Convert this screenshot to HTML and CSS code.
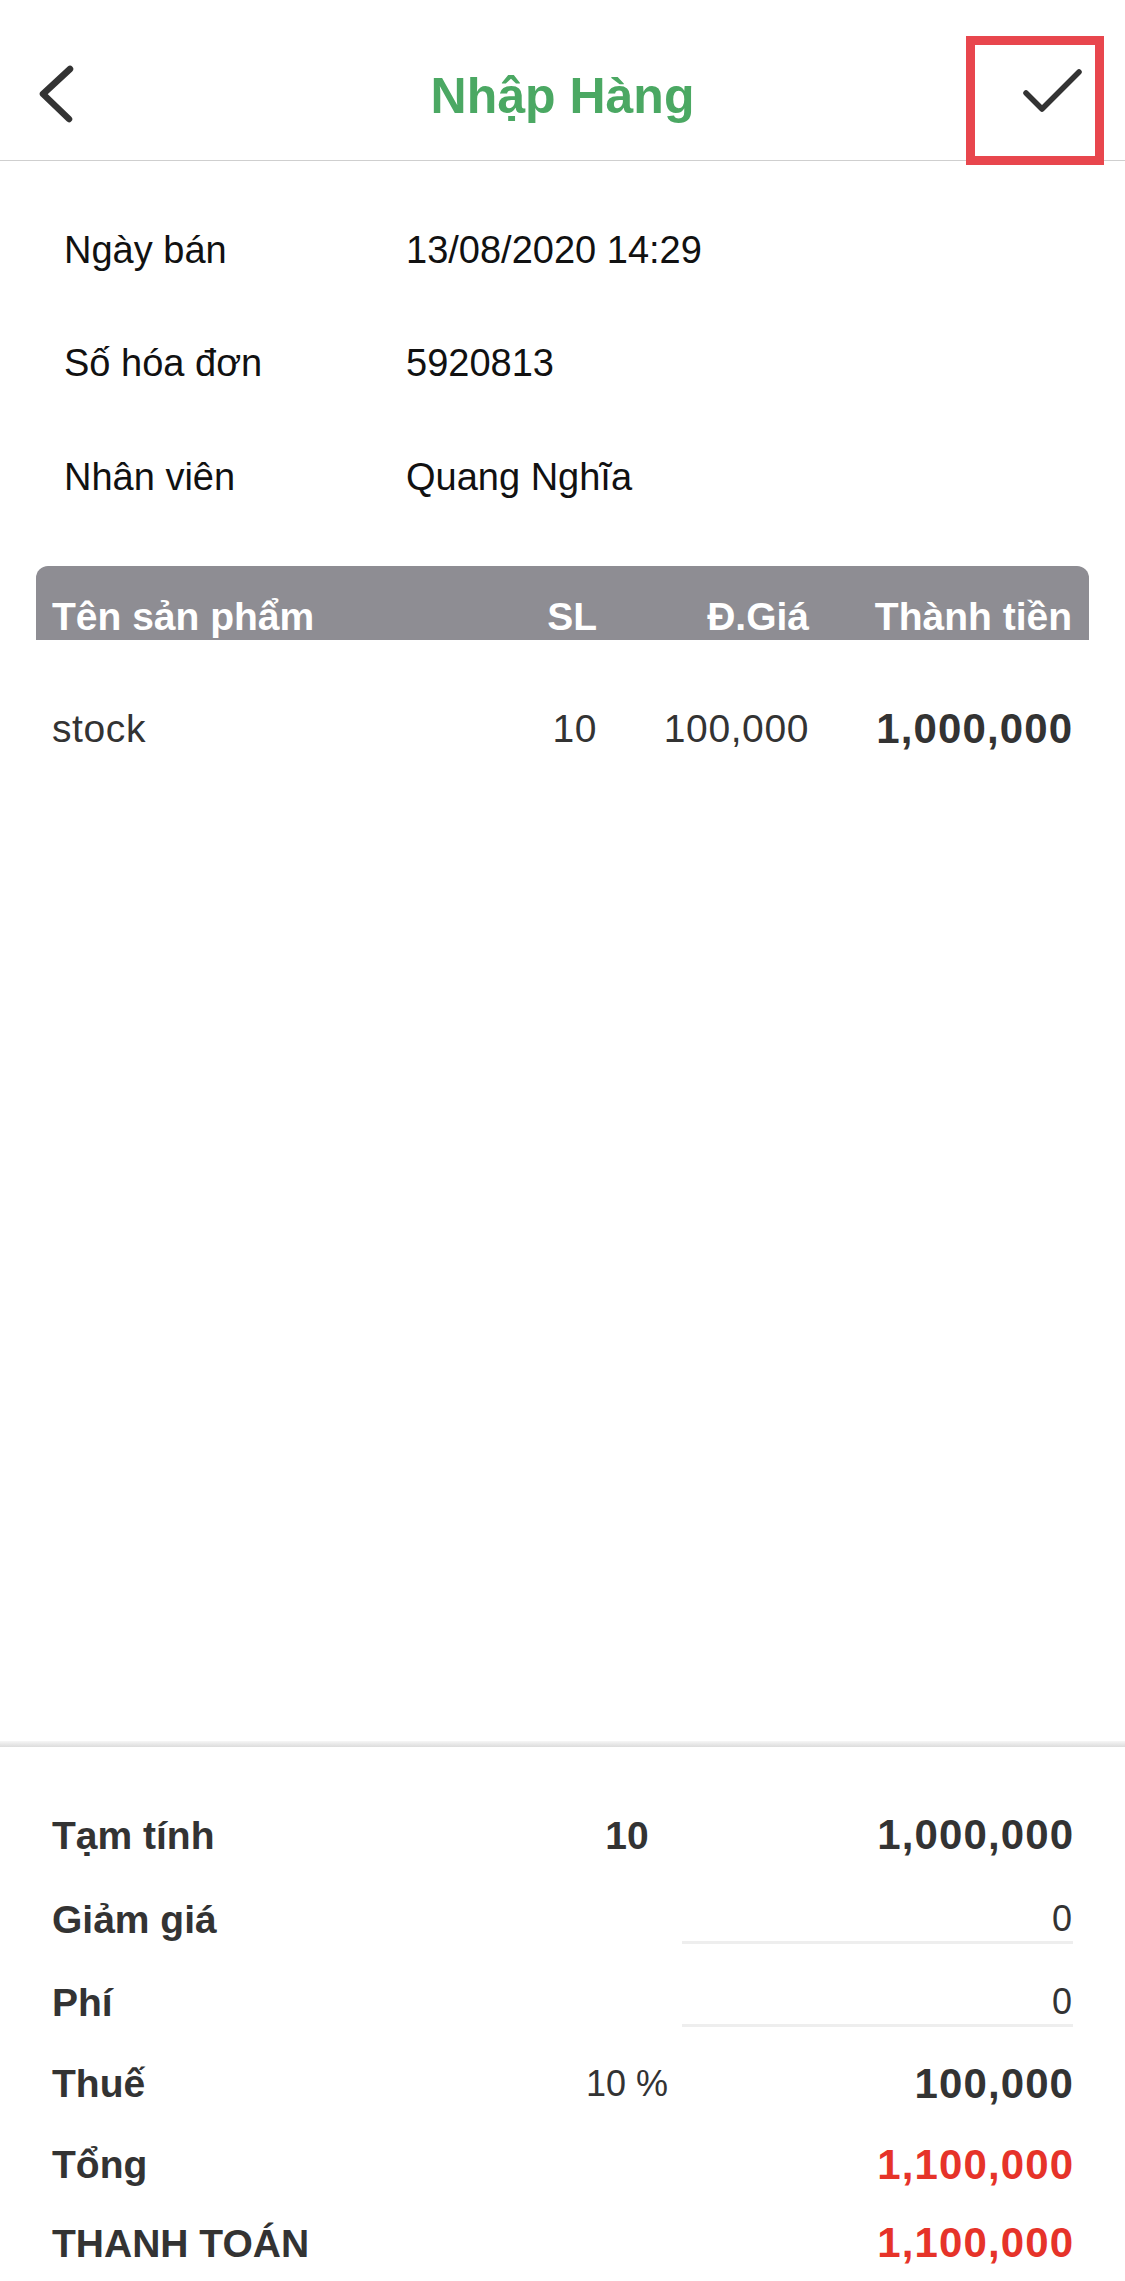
FILE: index.html
```html
<!DOCTYPE html>
<html lang="vi">
<head>
<meta charset="utf-8">
<title>Nhập Hàng</title>
<link rel="stylesheet" href="styles.css">
</head>
<body>
<div class="page">
  <header class="topbar">
    <div class="nav nav-left">
      <svg width="125" height="160" viewBox="0 0 125 160"><polyline points="70,69 43,94 69,119" fill="none" stroke="#333" stroke-width="6.5" stroke-linecap="round" stroke-linejoin="round"/></svg>
    </div>
    <h1 class="title">Nhập Hàng</h1>
    <div class="nav nav-right">
      <svg width="125" height="160" viewBox="0 0 125 160"><polyline points="26,93 42,109 79,72" fill="none" stroke="#333" stroke-width="5.5" stroke-linecap="round" stroke-linejoin="round"/></svg>
    </div>
    <div class="highlight"></div>
  </header>

  <section class="info">
    <div class="info-row"><span>Ngày bán</span><span>13/08/2020 14:29</span></div>
    <div class="info-row"><span>Số hóa đơn</span><span>5920813</span></div>
    <div class="info-row"><span>Nhân viên</span><span>Quang Nghĩa</span></div>
  </section>

  <section class="items">
    <div class="items-head">
      <span>Tên sản phẩm</span>
      <span class="r">SL</span>
      <span class="r">Đ.Giá</span>
      <span class="r">Thành tiền</span>
    </div>
    <div class="items-row">
      <span>stock</span>
      <span class="r">10</span>
      <span class="r">100,000</span>
      <span class="r"><b class="bnum">1,000,000</b></span>
    </div>
  </section>

  <div class="spacer"></div>

  <footer class="summary">
    <div class="sep"></div>
    <div class="rows">
      <div class="srow h84"><span class="label">Tạm tính</span><span class="mid bold">10</span><span class="val"><b class="bnum">1,000,000</b></span></div>
      <div class="srow h84"><span class="label">Giảm giá</span><span class="mid"></span><span class="val input">0</span></div>
      <div class="srow h82"><span class="label">Phí</span><span class="mid"></span><span class="val input">0</span></div>
      <div class="srow h81"><span class="label">Thuế</span><span class="mid small">10 %</span><span class="val"><b class="bnum">100,000</b></span></div>
      <div class="srow h81"><span class="label">Tổng</span><span class="mid"></span><span class="val"><b class="bnum red">1,100,000</b></span></div>
      <div class="srow h76"><span class="label">THANH TOÁN</span><span class="mid"></span><span class="val"><b class="bnum red">1,100,000</b></span></div>
    </div>
  </footer>
</div>
</body>
</html>
```

FILE: styles.css
```css
html, body {
  margin: 0;
  padding: 0;
  background: #ffffff;
}

body {
  font-family: "Liberation Sans", Arial, sans-serif;
  color: #333333;
}

.page {
  width: 1125px;
  height: 2281px;
  display: flex;
  flex-direction: column;
  overflow: hidden;
}

/* ---------- top bar ---------- */
.topbar {
  position: relative;
  box-sizing: border-box;
  height: 161px;
  border-bottom: 1px solid #cfcfcf;
  display: grid;
  grid-template-columns: 125px 1fr 125px;
  flex: none;
}

.nav svg {
  display: block;
}

.title {
  margin: 71px 0 0;
  align-self: start;
  text-align: center;
  font-size: 50px;
  line-height: 50px;
  font-weight: bold;
  color: #4ba863;
}

.highlight {
  position: absolute;
  left: 966px;
  top: 36px;
  width: 138px;
  height: 129px;
  box-sizing: border-box;
  border: 9px solid #e8464d;
}

/* ---------- info ---------- */
.info {
  padding: 32px 0 0 64px;
  flex: none;
}

.info-row {
  display: grid;
  grid-template-columns: 342px 1fr;
  align-items: center;
  height: 113.5px;
  font-size: 38px;
  line-height: 44px;
  color: #111111;
}

/* ---------- items table ---------- */
.items {
  margin: 32.5px 36px 0;
  flex: none;
}

.items-head,
.items-row {
  display: grid;
  grid-template-columns: 1fr 120px 212px 263px;
  font-size: 39px;
  line-height: 45px;
}

.items-head {
  padding: 28px 17px 1px 16px;
  background: #8e8d93;
  border-radius: 12px 12px 0 0;
  color: #ffffff;
  font-weight: bold;
}

.items-row {
  padding: 66px 17px 0 16px;
  color: #333333;
  letter-spacing: 0.6px;
}

.r {
  text-align: right;
}

.bnum {
  font-weight: bold;
  font-size: 42px;
  letter-spacing: 1.1px;
  margin-right: -1.1px;
}

.spacer {
  flex: 1;
}

/* ---------- summary ---------- */
.summary {
  flex: none;
}

.sep {
  height: 6px;
  background: linear-gradient(#f6f6f6, #dcdcdc);
}

.rows {
  padding: 46px 52px 0;
}

.srow {
  display: grid;
  grid-template-columns: 520px 110px 1fr;
  align-items: center;
  font-size: 39px;
  line-height: 45px;
  color: #333333;
}

.h84 { height: 84px; }
.h82 { height: 82px; }
.h81 { height: 81px; }
.h76 { height: 76px; }

.label {
  font-weight: bold;
}

.mid {
  text-align: center;
}

.mid.bold {
  font-weight: bold;
}

.mid.small {
  font-size: 36px;
}

.val {
  text-align: right;
}

.val.input {
  font-size: 36px;
  line-height: 40px;
  padding: 5px 1px 2px 0;
  border-bottom: 3px solid #eeeeee;
}

.red {
  color: #e63329;
}
```
